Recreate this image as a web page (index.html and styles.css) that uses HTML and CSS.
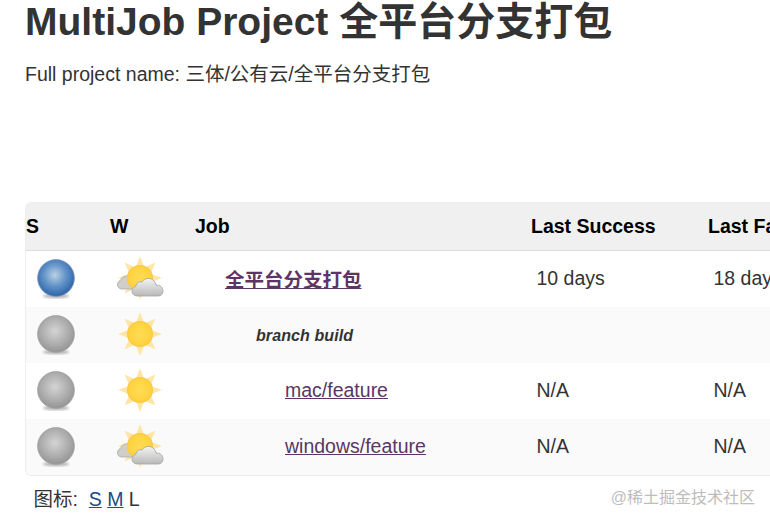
FILE: index.html
```html
<!DOCTYPE html>
<html>
<head>
  <title>MultiJob Project 全平台分支打包</title>
  <link rel="stylesheet" href="styles.css">
</head>
<body>

<svg class="defs" width="0" height="0">
  <defs>
    <radialGradient id="blueBall" cx="47%" cy="42%" r="58%">
      <stop offset="0" stop-color="#bcd0e2"/>
      <stop offset="0.5" stop-color="#6596ca"/>
      <stop offset="1" stop-color="#2d63a9"/>
    </radialGradient>
    <radialGradient id="greyBall" cx="47%" cy="42%" r="58%">
      <stop offset="0" stop-color="#d4d4d4"/>
      <stop offset="0.55" stop-color="#b2b2b2"/>
      <stop offset="1" stop-color="#959595"/>
    </radialGradient>
    <radialGradient id="sunCore" cx="50%" cy="50%" r="55%">
      <stop offset="0" stop-color="#ffdc55"/>
      <stop offset="0.75" stop-color="#fed340"/>
      <stop offset="1" stop-color="#f8bf45"/>
    </radialGradient>
    <linearGradient id="cloudFill" x1="0" y1="0" x2="0" y2="1">
      <stop offset="0" stop-color="#f4f4f4"/>
      <stop offset="1" stop-color="#b9b9b9"/>
    </linearGradient>
    <filter id="soft"><feGaussianBlur stdDeviation="1.2"/></filter>
    <g id="rays" fill="#fde6a4">
      <path id="ray" d="M24 1l4.500 12h-9z"/>
      <use href="#ray" transform="rotate(45 24 23)"/>
      <use href="#ray" transform="rotate(90 24 23)"/>
      <use href="#ray" transform="rotate(135 24 23)"/>
      <use href="#ray" transform="rotate(180 24 23)"/>
      <use href="#ray" transform="rotate(225 24 23)"/>
      <use href="#ray" transform="rotate(270 24 23)"/>
      <use href="#ray" transform="rotate(315 24 23)"/>
    </g>
    <symbol id="ball-blue" viewBox="0 0 40 44">
      <ellipse cx="20" cy="39" rx="13" ry="2.5" fill="#bbb" filter="url(#soft)"/>
      <circle cx="20" cy="21" r="18.4" fill="url(#blueBall)" stroke="#7d97b8" stroke-width="0.8"/>
    </symbol>
    <symbol id="ball-grey" viewBox="0 0 40 44">
      <ellipse cx="20" cy="39" rx="13" ry="2.5" fill="#bbb" filter="url(#soft)"/>
      <circle cx="20" cy="21" r="18.4" fill="url(#greyBall)" stroke="#a0a0a0" stroke-width="0.8"/>
    </symbol>
    <symbol id="sun" viewBox="0 0 48 48">
      <use href="#rays"/>
      <circle cx="24" cy="23" r="13" fill="url(#sunCore)"/>
    </symbol>
    <symbol id="sun-cloud" viewBox="0 0 48 48">
      <use href="#rays"/>
      <path fill="#cfcfc8" stroke="#aaa" stroke-width="0.8" d="M6 34c-3 0-4.500-2-4.500-4.500 0-2 1-3.500 3-4 1-3 4-5 7-4.500l5 2v11z"/>
      <circle cx="24" cy="23" r="13" fill="url(#sunCore)"/>
      <path fill="url(#cloudFill)" stroke="#a3a3a3" stroke-width="0.8" d="M22 41c-4 0-6-2-6-5 0-3 2-4 4-5 0-3 3-5 6-4 2-4 9-5 12-1 1 1 2 3 2 4 4 0 7 2 7 6 0 3-2 5-5 5z"/>
    </symbol>
  </defs>
</svg>

<h1 class="title">MultiJob Project 全平台分支打包</h1>
<p class="full-name">Full project name: 三体/公有云/全平台分支打包</p>

<div class="table-wrap">
  <table class="jobs">
    <thead>
      <tr><th class="col-s">S</th><th class="col-w">W</th><th class="col-job">Job</th><th class="col-time">Last Success</th><th class="col-time">Last Failure</th></tr>
    </thead>
    <tbody>
      <tr>
        <td class="icon-s"><svg class="ball"><use href="#ball-blue"/></svg></td>
        <td><svg class="weather"><use href="#sun-cloud"/></svg></td>
        <td class="indent-1"><a class="job-main" href="#">全平台分支打包</a></td>
        <td class="time">10 days</td>
        <td class="time">18 days</td>
      </tr>
      <tr class="odd">
        <td class="icon-s"><svg class="ball"><use href="#ball-grey"/></svg></td>
        <td><svg class="weather"><use href="#sun"/></svg></td>
        <td class="indent-2 phase">branch build</td>
        <td class="time"></td>
        <td class="time"></td>
      </tr>
      <tr>
        <td class="icon-s"><svg class="ball"><use href="#ball-grey"/></svg></td>
        <td><svg class="weather"><use href="#sun"/></svg></td>
        <td class="indent-3"><a class="job" href="#">mac/feature</a></td>
        <td class="time">N/A</td>
        <td class="time">N/A</td>
      </tr>
      <tr class="odd">
        <td class="icon-s"><svg class="ball"><use href="#ball-grey"/></svg></td>
        <td><svg class="weather"><use href="#sun-cloud"/></svg></td>
        <td class="indent-3"><a class="job" href="#">windows/feature</a></td>
        <td class="time">N/A</td>
        <td class="time">N/A</td>
      </tr>
    </tbody>
  </table>
</div>

<div class="icon-size">图标:&nbsp; <a href="#">S</a> <a href="#">M</a> L</div>

<div class="watermark">@稀土掘金技术社区</div>

</body>
</html>
```

FILE: styles.css
```css
html, body {
  height: 522px;
  overflow: hidden;
}
body {
  margin: 0;
  padding: 0 0 0 25px;
  position: relative;
  background: #fff;
  color: #333;
  font-family: "Liberation Sans", "Noto Sans CJK SC", sans-serif;
}
.defs {
  display: block;
}
.title {
  margin: 0;
  font-size: 39px;
  line-height: 44px;
  font-weight: bold;
  color: #333;
}
.full-name {
  margin: 17px 0 0;
  font-size: 19.5px;
  line-height: 26px;
  color: #333;
}
.table-wrap {
  margin-top: 115px;
  width: 745px;
  overflow: hidden;
  border: 1px solid #eee;
  border-right: 0;
  border-radius: 6px 0 0 6px;
}
.jobs {
  width: 819px;
  border-collapse: collapse;
  table-layout: fixed;
}
.jobs th {
  height: 47px;
  padding: 0;
  background: #f0f0f0;
  border-bottom: 1px solid #ddd;
  color: #000;
  font-size: 19.5px;
  text-align: left;
}
.col-s {
  width: 84px;
}
.col-w {
  width: 85px;
}
.col-job {
  width: 336px;
}
.col-time {
  width: 177px;
}
.jobs td {
  box-sizing: border-box;
  height: 56px;
  padding: 0 0 1px;
  font-size: 19.5px;
  color: #333;
}
.odd td {
  background: #fafafa;
}
.jobs .icon-s {
  padding: 0 0 0 10px;
}
.ball {
  display: block;
  width: 40px;
  height: 44px;
}
.weather {
  display: block;
  width: 48px;
  height: 48px;
  margin: 2px 0 0 6px;
}
.jobs .time {
  padding-left: 5.5px;
}
.jobs .indent-1 {
  padding-left: 30px;
}
.jobs .indent-2 {
  padding: 2px 0 0 61px;
}
.jobs .indent-3 {
  padding-left: 90px;
}
.jobs a {
  color: #5c3566;
}
.job-main {
  font-weight: bold;
}
.jobs .phase {
  font-size: 16px;
  font-weight: bold;
  font-style: italic;
  letter-spacing: 0.1px;
}
.icon-size {
  margin: 10px 0 0 8.5px;
  font-size: 19.5px;
  line-height: 26px;
}
.icon-size a {
  color: #204a87;
}
.watermark {
  position: absolute;
  right: 15px;
  top: 488px;
  font-size: 16px;
  line-height: 20px;
  color: #bdbdbd;
}
```
